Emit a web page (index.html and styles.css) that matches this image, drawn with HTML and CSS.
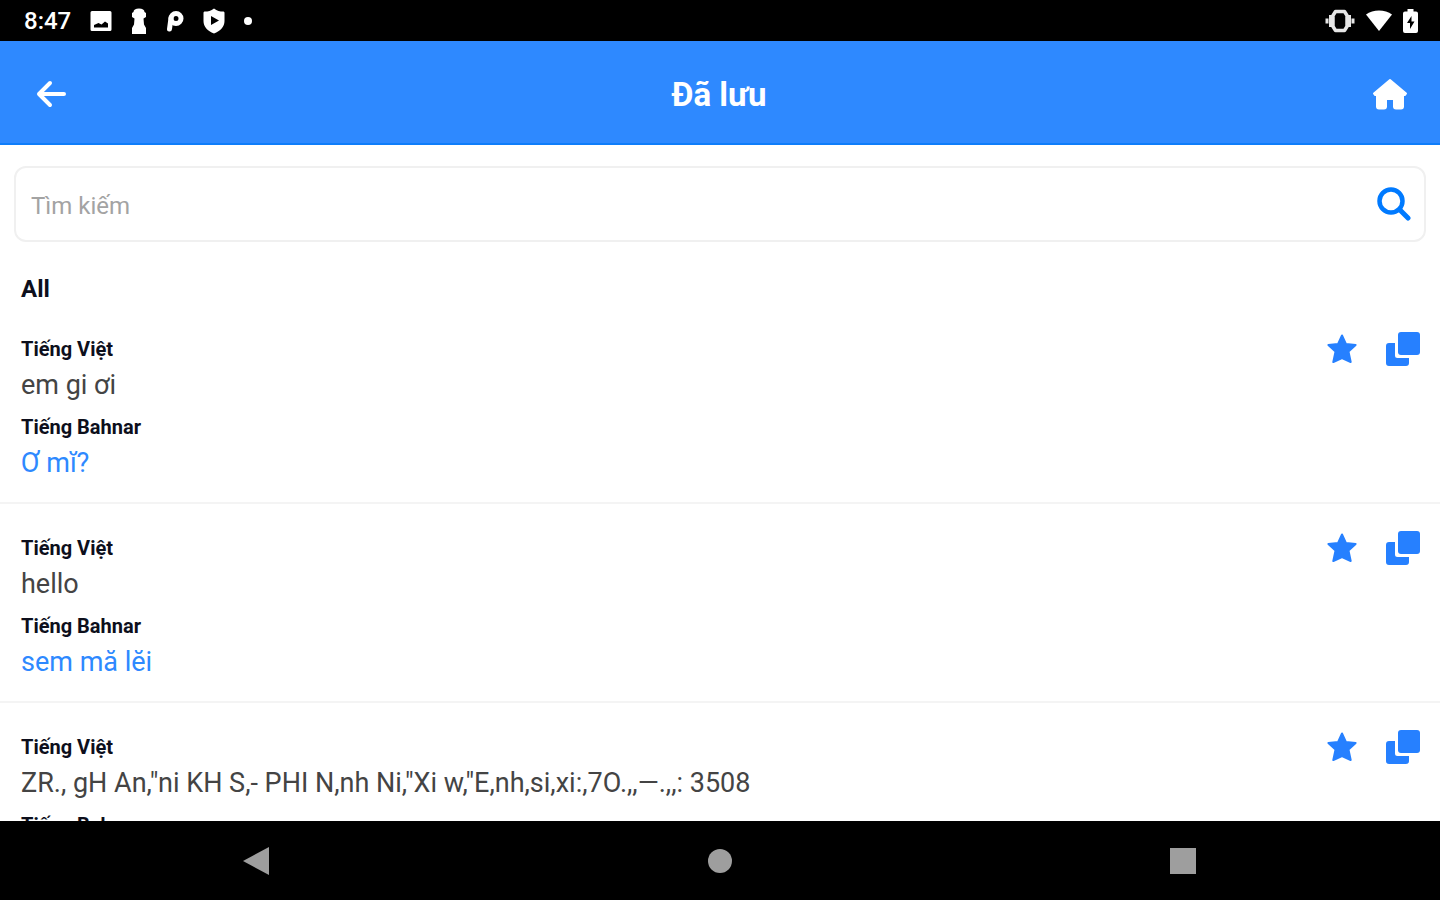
FILE: index.html
```html
<!DOCTYPE html>
<html lang="vi">
<head>
    <meta charset="UTF-8">
    <meta name="viewport" content="width=device-width, initial-scale=1.0">
    <title>Đã lưu</title>
    <link rel="stylesheet" href="styles.css">
</head>
<body>
    <svg class="sprite" aria-hidden="true">
        <symbol id="star" viewBox="0 0 32 32">
            <path d="M16 2.500l4 8.600 9.600.9-7.100 6.600 2.200 10.400-8.700-3.800-8.700 3.800 2.200-10.400L2.400 12l9.600-.9z" fill="currentColor" stroke="currentColor" stroke-width="2" stroke-linejoin="round"/>
        </symbol>
        <symbol id="copy" viewBox="0 0 34 34">
            <rect x="12" y="0" width="22" height="23" rx="3" fill="currentColor"/>
            <path d="M3 11h6v12.500a2.500 2.500 0 0 0 2.500 2.500H23v5a3 3 0 0 1-3 3H3a3 3 0 0 1-3-3V14a3 3 0 0 1 3-3z" fill="currentColor"/>
        </symbol>
    </svg>

    <div class="app">
        <div class="status-bar">
            <div class="status-left">
                <span class="time">8:47</span>
                <svg width="22" height="22" viewBox="0 0 22 22"><path fill="#fff" fill-rule="evenodd" d="M2 1h18a1.500 1.500 0 0 1 1.500 1.500v17A1.500 1.500 0 0 1 20 21H2a1.500 1.500 0 0 1-1.500-1.500v-17A1.500 1.500 0 0 1 2 1zm2 16.500h14v-4l-3-2-3.500 3-3-1.500L4 15z"/></svg>
                <svg width="16" height="26" viewBox="0 0 16 26"><path fill="#fff" d="M8 .5c3.500 0 5.500 1.500 5.500 3.500l1.500 1v4l-2.500 1.500.5 6 2 3.500v6H1v-6l2-3.500.5-6L1 9V5l1.500-1C2.500 2 4.500.5 8 .5z"/></svg>
                <svg width="18" height="22" viewBox="0 0 18 22"><circle cx="10" cy="8.500" r="5" fill="none" stroke="#fff" stroke-width="5"/><path d="M3.500 19L5 8" fill="none" stroke="#fff" stroke-width="5" stroke-linecap="round"/></svg>
                <svg width="22" height="26" viewBox="0 0 22 26"><path fill="#fff" fill-rule="evenodd" d="M11 .5c3 2.500 6 3 9 3 1 0 1.500.5 1.500 1.500v8c0 5.500-4 10-10.500 12.500C4.500 23 .5 18.500.5 13V5c0-1 .5-1.500 1.500-1.500 3 0 6-.5 9-3zM8 8v9l8-4.500z"/></svg>
                <svg width="8" height="8" viewBox="0 0 8 8"><circle cx="4" cy="4" r="4" fill="#fff"/></svg>
            </div>
            <div class="status-right">
                <svg width="30" height="24" viewBox="0 0 30 24"><path fill="none" stroke="#e6e6e6" stroke-width="3.500" stroke-linejoin="round" d="M10.500 2.500h9l2.500 4v11l-2.500 4h-9l-2.500-4v-11z"/><path d="M5.500 6v12M24.500 6v12M2 9.500v5M28 9.500v5" stroke="#e6e6e6" stroke-width="3"/></svg>
                <svg width="26" height="22" viewBox="0 0 26 22"><path fill="#fff" d="M0 4.500C7-.8 19-.8 26 4.500L13 21z"/></svg>
                <svg width="15" height="24" viewBox="0 0 15 24"><path fill="#fff" fill-rule="evenodd" d="M4.500 0h6v2.500H13a2 2 0 0 1 2 2V22a2 2 0 0 1-2 2H2a2 2 0 0 1-2-2V4.500a2 2 0 0 1 2-2h2.500zM8.500 7L4 14h3v6l4.500-7.500h-3z"/></svg>
            </div>
        </div>

        <header class="header">
            <button class="icon-btn" type="button" aria-label="Quay lại">
                <svg width="30" height="28" viewBox="0 0 30 28"><path fill="none" stroke="#fff" stroke-width="4" stroke-linecap="round" stroke-linejoin="round" d="M14 3L3 14l11 11M3 14h25"/></svg>
            </button>
            <h1>Đã lưu</h1>
            <button class="icon-btn" type="button" aria-label="Trang chủ">
                <svg width="36" height="32" viewBox="0 0 36 32"><path fill="#fff" stroke="#fff" stroke-width="2" stroke-linejoin="round" d="M18 2L34 15.500l-1 1.500h-2v11.500c0 1.500-1 2-2 2h-5c-1 0-2-.5-2-2V21h-8v7.500c0 1.500-1 2-2 2H7c-1 0-2-.5-2-2V17H3l-1-1.500z"/></svg>
            </button>
        </header>

        <main class="content">
            <form class="search">
                <input type="text" placeholder="Tìm kiếm" aria-label="Tìm kiếm">
                <button class="icon-btn" type="button" aria-label="Tìm">
                    <svg width="34" height="34" viewBox="0 0 34 34"><circle cx="14" cy="14" r="11.500" fill="none" stroke="#007aff" stroke-width="4.500"/><path d="M22.500 22.500L31 31" stroke="#007aff" stroke-width="5" stroke-linecap="round"/></svg>
                </button>
            </form>

            <h2>All</h2>

            <ul class="list">
                <li class="item">
                    <div class="item-text">
                        <h3>Tiếng Việt</h3>
                        <p>em gi ơi</p>
                        <h3>Tiếng Bahnar</h3>
                        <p class="translated">Ơ mĭ?</p>
                    </div>
                    <div class="actions">
                        <button class="icon-btn" type="button" aria-label="Bỏ lưu"><svg width="32" height="32"><use href="#star"/></svg></button>
                        <button class="icon-btn" type="button" aria-label="Sao chép"><svg width="34" height="34"><use href="#copy"/></svg></button>
                    </div>
                </li>
                <li class="item">
                    <div class="item-text">
                        <h3>Tiếng Việt</h3>
                        <p>hello</p>
                        <h3>Tiếng Bahnar</h3>
                        <p class="translated">sem mă lĕi</p>
                    </div>
                    <div class="actions">
                        <button class="icon-btn" type="button" aria-label="Bỏ lưu"><svg width="32" height="32"><use href="#star"/></svg></button>
                        <button class="icon-btn" type="button" aria-label="Sao chép"><svg width="34" height="34"><use href="#copy"/></svg></button>
                    </div>
                </li>
                <li class="item">
                    <div class="item-text">
                        <h3>Tiếng Việt</h3>
                        <p>ZR., gH An,"ni KH S,- PHI N,nh Ni,"Xi w,"E,nh,si,xi:,7O.,,—.,,: 3508</p>
                        <h3>Tiếng Bahnar</h3>
                    </div>
                    <div class="actions">
                        <button class="icon-btn" type="button" aria-label="Bỏ lưu"><svg width="32" height="32"><use href="#star"/></svg></button>
                        <button class="icon-btn" type="button" aria-label="Sao chép"><svg width="34" height="34"><use href="#copy"/></svg></button>
                    </div>
                </li>
            </ul>
        </main>

        <nav class="nav-bar">
            <button class="icon-btn" type="button" aria-label="Back"><svg width="28" height="30" viewBox="0 0 28 30"><path d="M0 15L26 1v28z" fill="#9e9e9e"/></svg></button>
            <button class="icon-btn" type="button" aria-label="Home"><svg width="26" height="26" viewBox="0 0 26 26"><circle cx="13" cy="13" r="12" fill="#9e9e9e"/></svg></button>
            <button class="icon-btn" type="button" aria-label="Recents"><svg width="26" height="26" viewBox="0 0 26 26"><rect width="26" height="26" fill="#9e9e9e"/></svg></button>
        </nav>
    </div>
</body>
</html>
```

FILE: styles.css
```css
* {
    box-sizing: border-box;
    margin: 0;
    padding: 0;
}
body {
    font-family: Roboto, "Noto Sans", sans-serif;
    background-color: #fff;
    color: #0d0f1c;
}
.sprite {
    display: none;
}
.app {
    display: flex;
    flex-direction: column;
    height: 100vh;
}
.icon-btn {
    display: flex;
    border: none;
    background: none;
    color: #2680ff;
    cursor: pointer;
}

/* status bar */
.status-bar {
    display: flex;
    flex: none;
    justify-content: space-between;
    height: 41px;
    padding: 0 22px 0 24px;
    background-color: #000;
    color: #fff;
}
.status-left,
.status-right {
    display: flex;
    align-items: center;
}
.status-left {
    gap: 19px;
}
.status-right {
    gap: 11px;
}
.time {
    font-size: 24px;
    font-weight: 500;
}

/* header */
.header {
    display: flex;
    flex: none;
    align-items: center;
    justify-content: space-between;
    height: 104px;
    padding: 4px 32px 0 36px;
    background-color: #2e89ff;
    border-bottom: 2px solid #0f7dfa;
    color: #fff;
}
.header h1 {
    font-size: 33px;
    font-weight: 700;
}

/* content */
.content {
    flex: 1;
    min-height: 0;
    overflow: hidden;
}
.search {
    display: flex;
    align-items: center;
    height: 76px;
    margin: 21px 14px 0;
    padding: 0 13px 0 15px;
    border: 2px solid #f0f0f0;
    border-radius: 12px;
}
.search input {
    flex: 1;
    min-width: 0;
    padding-top: 4px;
    border: none;
    outline: none;
    background: none;
    color: #444;
    font: 24px Roboto, "Noto Sans", sans-serif;
}
.search input::placeholder {
    color: #a3a3a3;
}
.content h2 {
    margin-top: 31px;
    padding: 0 21px;
    font-size: 24px;
    font-weight: 700;
    line-height: 32px;
}
.list {
    list-style: none;
}
.item {
    display: flex;
    justify-content: space-between;
    padding: 29px 20px 18px 21px;
    border-bottom: 2px solid #f4f4f4;
}
.item h3 {
    font-size: 20px;
    font-weight: 700;
    line-height: 30px;
}
.item p {
    margin-bottom: 6px;
    color: #444;
    font-size: 27px;
    line-height: 42px;
}
.item p:last-child {
    margin-bottom: 0;
}
.item .translated {
    color: #2e89ff;
}
.actions {
    display: flex;
    align-items: center;
    gap: 28px;
    height: 30px;
}

/* navigation bar */
.nav-bar {
    display: grid;
    flex: none;
    grid-template-columns: repeat(3, 1fr);
    align-items: center;
    justify-items: center;
    height: 79px;
    padding: 0 25px;
    background-color: #000;
}
```
